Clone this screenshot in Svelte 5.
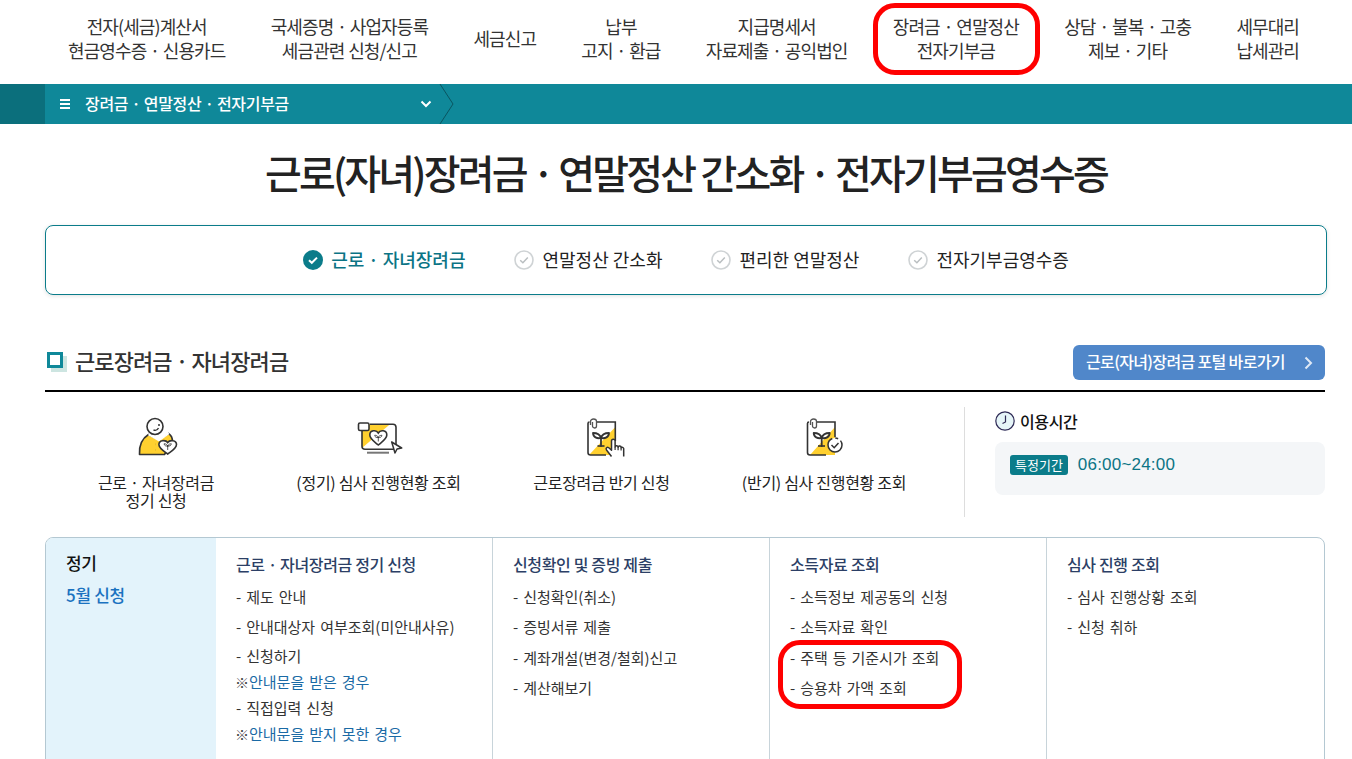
<script>
  const navItems = [
    ['전자(세금)계산서', '현금영수증 · 신용카드'],
    ['국세증명 · 사업자등록', '세금관련 신청/신고'],
    ['세금신고'],
    ['납부', '고지 · 환급'],
    ['지급명세서', '자료제출 · 공익법인'],
    ['장려금 · 연말정산', '전자기부금'],
    ['상담 · 불복 · 고충', '제보 · 기타'],
    ['세무대리', '납세관리']
  ];
  const tabs = [
    { label: '근로 · 자녀장려금', on: true },
    { label: '연말정산 간소화' },
    { label: '편리한 연말정산' },
    { label: '전자기부금영수증' }
  ];
  const columns = [
    {
      title: '근로 · 자녀장려금 정기 신청',
      tight: true,
      links: [
        { text: '- 제도 안내' },
        { text: '- 안내대상자 여부조회(미안내사유)' },
        { text: '- 신청하기' },
        { text: '안내문을 받은 경우', note: true },
        { text: '- 직접입력 신청' },
        { text: '안내문을 받지 못한 경우', note: true }
      ]
    },
    {
      title: '신청확인 및 증빙 제출',
      links: [
        { text: '- 신청확인(취소)' },
        { text: '- 증빙서류 제출' },
        { text: '- 계좌개설(변경/철회)신고' },
        { text: '- 계산해보기' }
      ]
    },
    {
      title: '소득자료 조회',
      links: [
        { text: '- 소득정보 제공동의 신청' },
        { text: '- 소득자료 확인' },
        { text: '- 주택 등 기준시가 조회' },
        { text: '- 승용차 가액 조회' }
      ]
    },
    {
      title: '심사 진행 조회',
      links: [{ text: '- 심사 진행상황 조회' }, { text: '- 신청 취하' }]
    }
  ];
</script>

{#snippet sprout(x, y, s)}
  <g transform="translate({x} {y}) scale({s})" fill="none" stroke="#333" stroke-width="1.8" stroke-linecap="round" stroke-linejoin="round">
    <path d="M0 8V-1" />
    <path d="M0 0C-1-4-5-5-8-5C-8-1-4 1 0 0Z" />
    <path d="M0 0C1-4 5-5 8-5C8-1 4 1 0 0Z" />
  </g>
{/snippet}

{#snippet clip(x)}
  <path transform="translate({x} 0)" d="M0 10V6.500a3 2.500 0 0 1 6 0V11a2 2 0 0 1-4 0V7" fill="none" stroke="#555" stroke-width="1.300" />
{/snippet}

<div class="page">
  <header class="gnb">
    {#each navItems as lines}
      <div class="gnb-item">
        {#each lines as line}<span>{line}</span>{/each}
      </div>
    {/each}
  </header>

  <div class="crumb">
    <div class="crumb-home"></div>
    <div class="crumb-current">
      <span class="burger"><i></i><i></i><i></i></span>
      <span class="crumb-label">장려금 · 연말정산 · 전자기부금</span>
      <svg class="crumb-down" width="12" height="8" viewBox="0 0 12 8"><path d="M1.5 1.5L6 6l4.5-4.5" fill="none" stroke="#fff" stroke-width="2" /></svg>
    </div>
    <svg class="crumb-sep" width="16" height="40" viewBox="0 0 16 40"><path d="M1 0l13 20L1 40" fill="none" stroke="#0a5560" stroke-width="1" /></svg>
  </div>

  <main class="content">
    <h1>근로(자녀)장려금 · 연말정산 간소화 · 전자기부금영수증</h1>

    <nav class="tabs">
      {#each tabs as tab}
        <div class="tab" class:on={tab.on}>
          {#if tab.on}
            <svg width="20" height="20" viewBox="0 0 20 20"><circle cx="10" cy="10" r="10" fill="#0b7c8a" /><path d="M6 10.200l2.800 2.600L14 7.600" fill="none" stroke="#fff" stroke-width="2" /></svg>
          {:else}
            <svg width="20" height="20" viewBox="0 0 20 20"><circle cx="10" cy="10" r="9" fill="#fff" stroke="#cfd3d5" stroke-width="1.600" /><path d="M6.200 10.200l2.700 2.600L13.800 7.600" fill="none" stroke="#b9bec0" stroke-width="1.500" /></svg>
          {/if}
          <span>{tab.label}</span>
        </div>
      {/each}
    </nav>

    <div class="section-head">
      <h2><span class="square"></span>근로장려금 · 자녀장려금</h2>
      <div class="portal">
        <span class="portal-label">근로(자녀)장려금 포털 바로가기</span>
        <svg width="9" height="14" viewBox="0 0 9 14"><path d="M1.500 1.500L7 7l-5.500 5.500" fill="none" stroke="#dfe9f6" stroke-width="2" /></svg>
      </div>
    </div>

    <div class="quick">
      <div class="shortcuts">
        <div class="shortcut">
          <svg width="48" height="48" viewBox="0 0 48 48">
            <path d="M7.500 39.500c-.5-9 2.500-16 9-20l10 5 10-6c3 2 4 5 4 8l-8 13z" fill="#ffd02f" stroke="#333" stroke-width="1.600" stroke-linejoin="round" />
            <path d="M16.500 19.500l10.500 6 10-7-4-3H20z" fill="#fff" />
            <path d="M16.500 19.500l10.500 6 10-7" fill="none" stroke="#fff" stroke-width="1.500" />
            <circle cx="23" cy="11.500" r="8" fill="#fff" stroke="#333" stroke-width="1.600" />
            <path d="M21.500 15c2 .8 4 0 5-2" fill="none" stroke="#333" stroke-width="1.400" />
            <circle cx="27" cy="10" r="1" fill="#333" />
            <path d="M23 29.300h.1M23 35h.1" stroke="#333" stroke-width="2" />
            <path d="M35.700 27.500c2-3 8.800-2.500 8.800 2 0 4-5.500 7-8.800 9.500-3.300-2.500-8.800-5.500-8.800-9.500 0-4.500 6.800-5 8.800-2z" fill="#fff" stroke="#333" stroke-width="1.600" />
            {@render sprout(35.7, 31, 0.45)}
          </svg>
          <p>근로 · 자녀장려금<br />정기 신청</p>
        </div>
        <div class="shortcut">
          <svg width="48" height="48" viewBox="0 0 48 48">
            <path d="M35 9.300H7V33z" fill="#ffd02f" />
            <path d="M7 15v16.300a3 3 0 0 0 3 3h28a3 3 0 0 0 3-3V12.300a3 3 0 0 0-3-3H15" fill="none" stroke="#333" stroke-width="1.600" />
            <rect x="3.500" y="8" width="10.500" height="7.500" rx="1.500" fill="#fff" stroke="#333" stroke-width="1.600" />
            <path d="M12 37.700h22" stroke="#777" stroke-width="2" />
            <path d="M23.300 18c2-3.500 8.500-3 8.500 2 0 4-5 7-8.500 10-3.500-3-8.500-6-8.500-10 0-5 6.500-5.500 8.500-2z" fill="#fff" stroke="#333" stroke-width="1.600" />
            {@render sprout(23.3, 22.500, 0.45)}
            <path d="M36.700 27l10 6-4.700 1-2 4z" fill="#fff" stroke="#333" stroke-width="1.500" stroke-linejoin="round" />
          </svg>
          <p>(정기) 심사 진행현황 조회</p>
        </div>
        <div class="shortcut">
          <svg width="48" height="48" viewBox="0 0 48 48">
            <path d="M37.300 12V40H11z" fill="#ffd02f" />
            <path d="M19 7H37.300V26M28 40H12.500a2.500 2.500 0 0 1-2.500-2.500V8.500A1.500 1.500 0 0 1 11.500 7" fill="none" stroke="#333" stroke-width="1.600" />
            {@render clip(12.5)}
            {@render sprout(23, 23, 1)}
            <path d="M19.500 31h7" stroke="#333" stroke-width="1.600" />
            <path d="M33.500 41.500L28.500 35a1.600 1.600 0 0 1 2.600-2l2.400 2.200V26a1.800 1.800 0 0 1 3.600 0v6a1.500 1.500 0 0 1 3 .3 1.500 1.500 0 0 1 3 .5 1.500 1.500 0 0 1 2.600 .8V41.500" fill="#fff" stroke="#333" stroke-width="1.500" stroke-linejoin="round" />
            <path d="M37.100 32v3M40.100 32.300v3M43.100 32.800v2.700" fill="none" stroke="#333" stroke-width="1.200" />
          </svg>
          <p>근로장려금 반기 신청</p>
        </div>
        <div class="shortcut">
          <svg width="48" height="48" viewBox="0 0 48 48">
            <path d="M35 12V40H10z" fill="#ffd02f" />
            <path d="M17 7H35V22M26 40H10a2.500 2.500 0 0 1-2.500-2.500V8.500A1.500 1.500 0 0 1 9 7" fill="none" stroke="#333" stroke-width="1.600" />
            {@render clip(10.5)}
            {@render sprout(21.7, 23, 1)}
            <path d="M18 31h7" stroke="#333" stroke-width="1.600" />
            <circle cx="35" cy="30" r="7" fill="#fff" stroke="#333" stroke-width="1.500" stroke-dasharray="30 3 3 3" />
            <path d="M31.500 30l2.700 2.700 4.300-4.700" fill="none" stroke="#333" stroke-width="1.500" />
          </svg>
          <p>(반기) 심사 진행현황 조회</p>
        </div>
      </div>
      <aside class="hours">
        <div class="hours-title">
          <svg width="20" height="20" viewBox="0 0 20 20"><circle cx="10" cy="10" r="9.200" fill="#e6f5f8" stroke="#2e2a55" stroke-width="1.200" /><path d="M10.500 4.500V11l-3 1.500" fill="none" stroke="#2e2a55" stroke-width="1.200" /></svg>
          <strong>이용시간</strong>
        </div>
        <div class="hours-box">
          <span class="badge">특정기간</span>
          <span class="time">06:00~24:00</span>
        </div>
      </aside>
    </div>

    <section class="board">
      <div class="period">
        <strong>정기</strong>
        <b>5월 신청</b>
      </div>
      {#each columns as col}
        <div class="col" class:tight={col.tight}>
          <h3>{col.title}</h3>
          <ul>
            {#each col.links as link}
              <li class:note={link.note}>{#if link.note}<span class="ref">※</span>{/if}{link.text}</li>
            {/each}
          </ul>
        </div>
      {/each}
    </section>
  </main>

  <!-- red marker boxes drawn over the screenshot -->
  <div class="mark mark-nav"></div>
  <div class="mark mark-list"></div>
</div>

<style>
  :global(body) {
    margin: 0;
    background: #fff;
  }

  .page {
    position: relative;
    height: 100vh;
    overflow: hidden;
    font-family: 'Noto Sans CJK KR', 'Noto Sans', sans-serif;
    color: #222;
  }

  .gnb {
    display: flex;
    align-items: center;
    gap: 45.3px;
    height: 84px;
    box-sizing: border-box;
    padding: 0 0 9px 68px;
    font-size: 18px;
    letter-spacing: -0.9px;
    word-spacing: 0.5px;
    line-height: 24px;
    color: #333;
  }

  .gnb-item {
    display: flex;
    flex-direction: column;
    align-items: center;
    white-space: nowrap;
  }

  .crumb {
    display: flex;
    height: 40px;
    background: #0f8899;
  }

  .crumb-home {
    width: 45px;
    background: #0b6f7c;
  }

  .crumb-current {
    display: flex;
    align-items: center;
    width: 394px;
    padding-left: 15px;
    box-sizing: border-box;
    color: #fff;
  }

  .burger {
    display: flex;
    flex-direction: column;
    gap: 2px;
    width: 10px;
    margin-right: 15px;
  }

  .burger i {
    height: 2px;
    background: #fff;
  }

  .crumb-label {
    flex: 1;
    margin-top: -2px;
    font-size: 16px;
    font-weight: 500;
    letter-spacing: -0.3px;
  }

  .crumb-down {
    margin-right: 7px;
  }

  .content {
    padding: 0 25px 0 45px;
  }

  h1 {
    margin: 20px 0 0;
    height: 81px;
    font-size: 40px;
    font-weight: 500;
    letter-spacing: -2.8px;
    line-height: 56px;
    text-align: center;
    color: #222;
  }

  .tabs {
    display: flex;
    justify-content: center;
    gap: 49px;
    align-items: center;
    height: 68px;
    border: 1px solid #0b7c8a;
    border-radius: 8px;
    box-shadow: 0 1px 4px rgba(0, 0, 0, 0.12);
  }

  .tab {
    display: flex;
    align-items: center;
    gap: 8px;
    padding-bottom: 2px;
    font-size: 18px;
    color: #222;
  }

  .tab svg {
    margin-top: 1px;
  }

  .tab.on {
    color: #0b7485;
    font-weight: 500;
  }

  .section-head {
    display: flex;
    align-items: center;
    justify-content: space-between;
    width: 1280px;
    height: 97px;
    box-sizing: border-box;
    padding: 50px 0 10px;
    border-bottom: 2px solid #000;
  }

  h2 {
    display: flex;
    align-items: center;
    margin: 0 0 5px;
    font-size: 22px;
    font-weight: 500;
    letter-spacing: -0.9px;
    color: #333;
  }

  .square {
    width: 16px;
    height: 16px;
    box-sizing: border-box;
    margin: 0 12px 0 2px;
    border: 3px solid #0f8899;
    box-shadow: 4px 4px 0 #cde5e1;
    background: #fff;
  }

  .portal {
    display: flex;
    align-items: center;
    justify-content: space-between;
    width: 252px;
    height: 35px;
    box-sizing: border-box;
    padding: 0 12px 0 13px;
    border-radius: 6px;
    background: #5087ca;
    color: #fff;
    font-size: 16px;
    font-weight: 500;
    letter-spacing: -0.65px;
  }

  .portal-label {
    padding-bottom: 3px;
  }

  .quick {
    display: flex;
    width: 1280px;
    height: 110px;
    margin-top: 15px;
  }

  .shortcuts {
    display: grid;
    grid-template-columns: 222px 223px 223px 222px;
    width: 920px;
    box-sizing: border-box;
    padding: 8px 30px 0 0;
    border-right: 1px solid #ddd;
    margin-right: 30px;
  }

  .shortcut {
    display: flex;
    flex-direction: column;
    align-items: center;
    text-align: center;
  }

  .shortcut p {
    margin: 10px 0 0;
    font-size: 16px;
    line-height: 18px;
    letter-spacing: -0.3px;
    color: #222;
  }

  .hours {
    flex: 1;
  }

  .hours-title {
    display: flex;
    align-items: center;
    gap: 5px;
    height: 20px;
    margin: 4px 0 11px;
    font-size: 16px;
    letter-spacing: -0.4px;
    color: #111;
  }

  .hours-title strong {
    font-weight: 500;
  }

  .hours-box {
    display: flex;
    align-items: center;
    gap: 10px;
    height: 53px;
    box-sizing: border-box;
    padding: 0 15px 8px;
    border-radius: 8px;
    background: #f4f6f8;
  }

  .badge {
    padding: 0 5px;
    height: 20px;
    line-height: 20px;
    border-radius: 3px;
    background: #0b7c8a;
    color: #fff;
    font-size: 13px;
  }

  .time {
    font-size: 17px;
    letter-spacing: 0.2px;
    color: #0b7485;
    font-family: 'Liberation Sans', sans-serif;
  }

  .board {
    display: grid;
    grid-template-columns: 170px 276px 277px 277px 1fr;
    width: 1280px;
    height: 300px;
    margin-top: 20px;
    box-sizing: border-box;
    border: 1px solid #b4c8d2;
    border-radius: 8px;
    overflow: hidden;
  }

  .period {
    display: flex;
    flex-direction: column;
    gap: 8px;
    padding: 12.5px 20px;
    background: #e3f3fb;
    font-size: 17px;
    line-height: 24px;
    letter-spacing: -0.3px;
  }

  .period strong {
    font-weight: 500;
    color: #111;
  }

  .period b {
    font-weight: 500;
    color: #1b72c0;
  }

  .col {
    padding: 14px 20px;
    border-left: 1px solid #c8d4da;
  }

  .col:nth-child(2) {
    border-left: 0;
  }

  h3 {
    margin: 0 0 10.5px;
    font-size: 16px;
    font-weight: 500;
    letter-spacing: -0.35px;
    line-height: 24px;
    color: #2c3f66;
  }

  ul {
    margin: 0;
    padding: 0;
    list-style: none;
    font-size: 15px;
    line-height: 20px;
    word-spacing: 1.6px;
    color: #333;
  }

  li {
    margin-bottom: 10.5px;
  }

  .tight li:nth-child(1) {
    margin-bottom: 10px;
  }

  .tight li:nth-child(2) {
    margin-bottom: 9px;
  }

  .tight li:nth-child(n + 3) {
    margin-bottom: 6px;
  }

  .tight li.note {
    margin-left: -1px;
    color: #1a6aa5;
  }

  .ref {
    font-size: 14px;
    color: #444;
  }

  .mark {
    position: absolute;
    box-sizing: border-box;
    border: 5px solid #f00;
    border-radius: 22px;
  }

  .mark-nav {
    left: 873px;
    top: 3px;
    width: 167px;
    height: 72px;
  }

  .mark-list {
    left: 778px;
    top: 640px;
    width: 184px;
    height: 69px;
  }
</style>
